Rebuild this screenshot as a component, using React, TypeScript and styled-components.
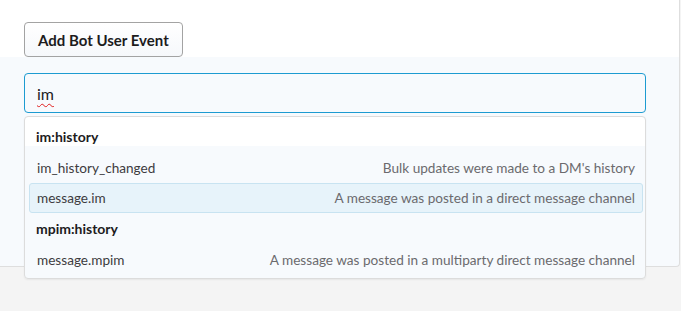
import React from 'react'
import styled, { createGlobalStyle } from 'styled-components'

const GlobalStyle = createGlobalStyle`
  html, body {
    margin: 0;
    padding: 0;
    background: #f4f4f4;
    font-family: Lato, "Noto Sans", sans-serif;
  }

  #root {
    min-height: 100vh;
    overflow: visible;
  }
`

const events = [
    {
        scope: 'im:history',
        items: [
            { name: 'im_history_changed', desc: "Bulk updates were made to a DM's history" },
            { name: 'message.im', desc: 'A message was posted in a direct message channel', active: true },
        ],
    },
    {
        scope: 'mpim:history',
        items: [
            { name: 'message.mpim', desc: 'A message was posted in a multiparty direct message channel' },
        ],
    },
]

const App: React.FC = () => (
    <Page>
        <GlobalStyle />
        <Card>
            <Header>
                <AddButton type="button">Add Bot User Event</AddButton>
            </Header>
            <Body>
                <SearchWrap>
                    <SearchBox role="textbox">
                        <Typed>im</Typed>
                    </SearchBox>
                    <Menu>
                        { events.map((group) => (
                            <React.Fragment key={ group.scope }>
                                <GroupTitle>{ group.scope }</GroupTitle>
                                { group.items.map((item) => (
                                    <Option key={ item.name } active={ !!item.active }>
                                        <OptionName>{ item.name }</OptionName>
                                        <OptionDesc>{ item.desc }</OptionDesc>
                                    </Option>
                                )) }
                            </React.Fragment>
                        )) }
                    </Menu>
                </SearchWrap>
            </Body>
        </Card>
    </Page>
)

export default App

const Page = styled.div`
  min-height: 100vh;
  background: #f4f4f4;
`

const Card = styled.div`
  position: relative;
  width: 680px;
  height: 267px;
  box-sizing: border-box;
  background: #f7fafd;
  border-right: 1px solid #dedede;
  border-bottom: 1px solid #dedede;
  border-bottom-right-radius: 4px;
  display: flex;
  flex-direction: column;
`

const Header = styled.div`
  height: 57px;
  box-sizing: border-box;
  padding: 22px 24px 0;
  background: #ffffff;
`

const AddButton = styled.button`
  height: 35px;
  padding: 0 13px;
  white-space: nowrap;
  border: 1px solid #a3a3a3;
  border-radius: 4px;
  background: linear-gradient(#ffffff, #f6f8fb);
  color: #1d1c1d;
  font-family: Lato, sans-serif;
  font-weight: 700;
  font-size: 15px;
  cursor: pointer;
`

const Body = styled.div`
  flex: 1;
  padding: 16px 33px 0 24px;
`

const SearchWrap = styled.div`
  position: relative;
`

const SearchBox = styled.div`
  height: 40px;
  box-sizing: border-box;
  border: 1px solid #1d9bd1;
  border-radius: 4px;
  background: #f7fafd;
  padding: 0 12px;
  display: flex;
  align-items: center;
  font-size: 16px;
  color: #1d1c1d;
`

const Typed = styled.span`
  text-decoration: underline wavy #e01e1e;
  text-decoration-thickness: 1px;
  text-underline-offset: 3px;
`

const Menu = styled.div`
  position: absolute;
  z-index: 10;
  top: 43px;
  left: 0;
  right: 0;
  box-sizing: border-box;
  border: 1px solid #dcdcdc;
  border-radius: 4px;
  background: linear-gradient(#ffffff 0 29px, #f7fafd 29px);
  box-shadow: 0 1px 2px rgba(0, 0, 0, 0.06);
  padding: 4px 2px 3px 4px;
`

const GroupTitle = styled.div`
  height: 32px;
  box-sizing: border-box;
  padding: 7px 0 0 7px;
  font-size: 14px;
  line-height: 18px;
  font-weight: 700;
  color: #1d1c1d;
`

const Option = styled.div<{ active: boolean }>`
  height: 30px;
  box-sizing: border-box;
  padding: 0 7px;
  border: 1px solid ${ props => props.active ? '#c8e3f1' : 'transparent' };
  border-radius: 3px;
  background: ${ props => props.active ? '#e7f3fa' : 'transparent' };
  display: flex;
  align-items: center;
  justify-content: space-between;
  font-size: 13.6px;
`

const OptionName = styled.span`
  color: #3d3c40;
`

const OptionDesc = styled.span`
  color: #6b6a6e;
`
